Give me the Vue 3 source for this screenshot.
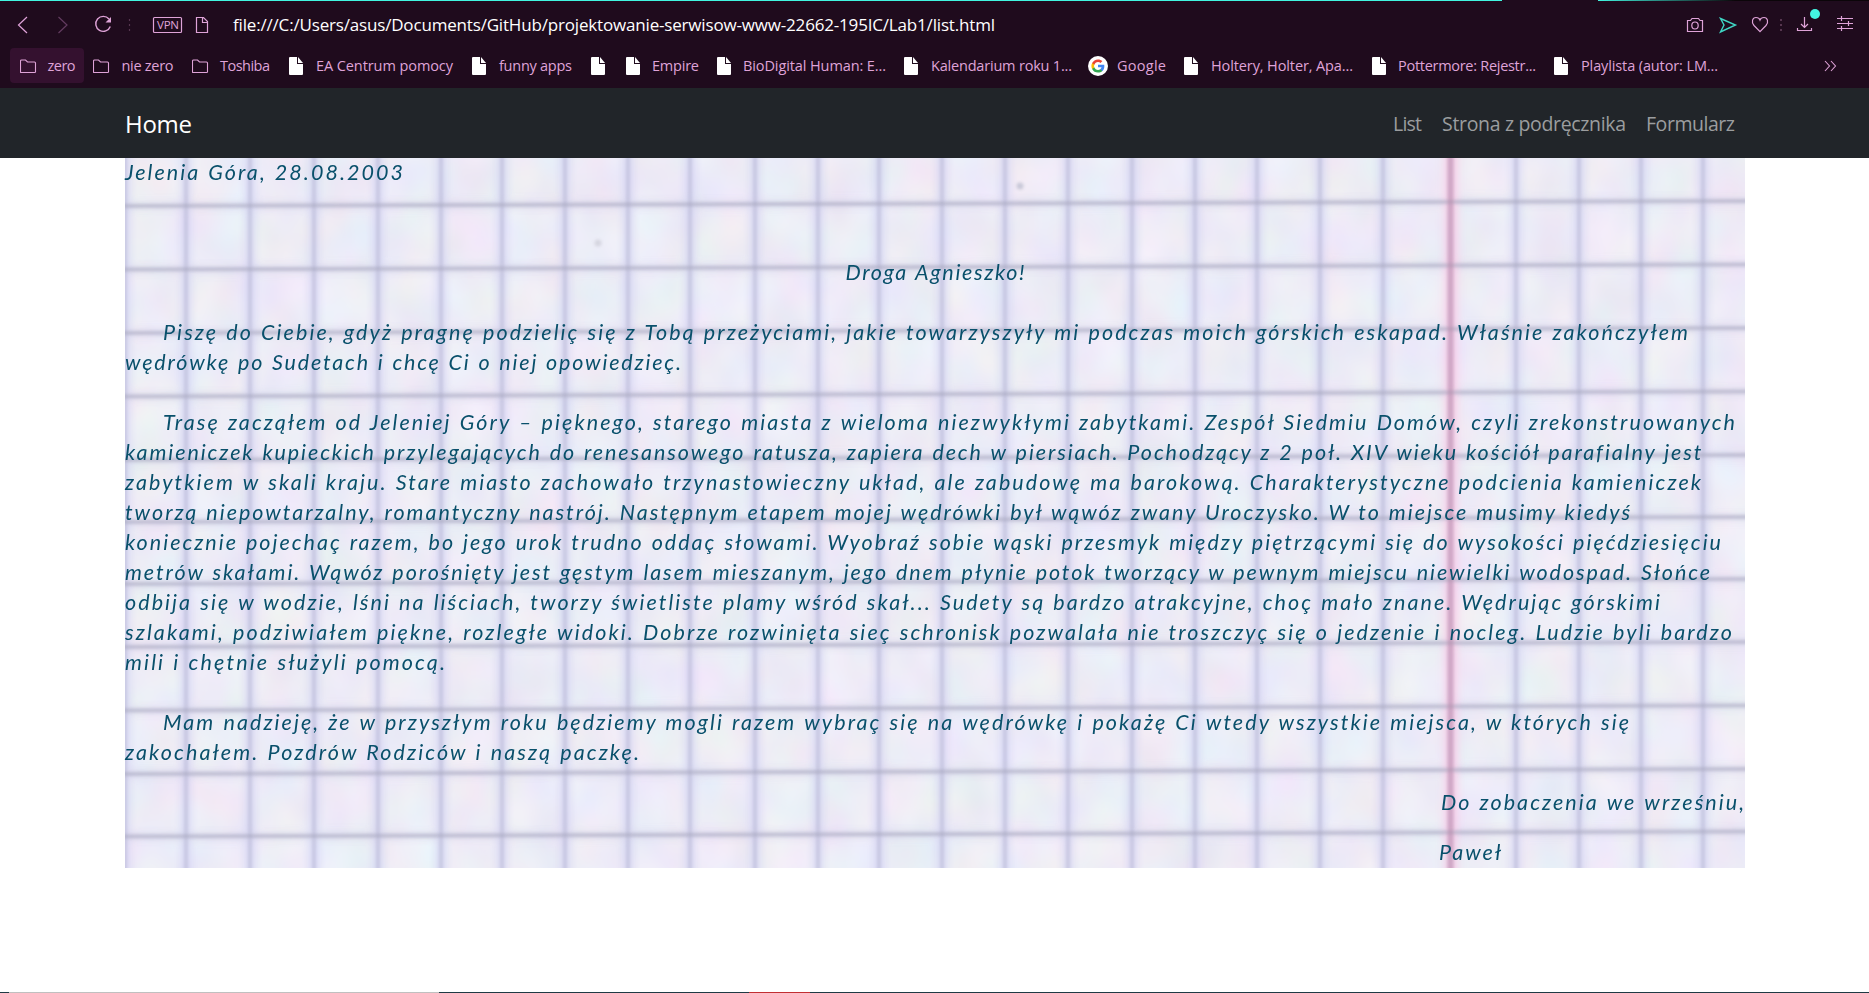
<script setup>
// Stretches or tightens a single line of text to a given width in pixels.
const vFit = {
  mounted(el, { value }) {
    const count = [...el.textContent].length
    const natural = el.getBoundingClientRect().width
    if (count > 1) {
      const spacing = (value - natural) / (count - 1)
      el.style.letterSpacing = `${spacing}px`
      el.style.marginRight = `${-spacing}px`
    }
  },
}

const bookmarks = [
  { icon: 'folder', x: 20, tx: 47.5, w: 28, label: 'zero', active: true },
  { icon: 'folder', x: 93, tx: 121.5, w: 52, label: 'nie zero' },
  { icon: 'folder', x: 192, tx: 220, w: 50, label: 'Toshiba' },
  { icon: 'page', x: 289, tx: 316, w: 137, label: 'EA Centrum pomocy' },
  { icon: 'page', x: 472, tx: 499, w: 73, label: 'funny apps' },
  { icon: 'page', x: 591, tx: 605, w: 0, label: '' },
  { icon: 'page', x: 626, tx: 652, w: 47, label: 'Empire' },
  { icon: 'page', x: 717, tx: 743, w: 143, label: 'BioDigital Human: E...' },
  { icon: 'page', x: 904, tx: 931, w: 141, label: 'Kalendarium roku 1...' },
  { icon: 'google', x: 1088, tx: 1117, w: 49, label: 'Google' },
  { icon: 'page', x: 1184, tx: 1211, w: 142, label: 'Holtery, Holter, Apa...' },
  { icon: 'page', x: 1372, tx: 1398, w: 138, label: 'Pottermore: Rejestr...' },
  { icon: 'page', x: 1554, tx: 1581, w: 137, label: 'Playlista (autor: LM...' },
]
const itemWidth = (i) => (i + 1 < bookmarks.length ? bookmarks[i + 1].x : 1824) - bookmarks[i].x

const paragraphs = [
  [
    ['Piszę do Ciebie, gdyż pragnę podzieliç się z Tobą przeżyciami, jakie towarzyszyły mi podczas moich górskich eskapad. Właśnie zakończyłem', 1525],
    ['wędrówkę po Sudetach i chcę Ci o niej opowiedzieç.', 556],
  ],
  [
    ['Trasę zacząłem od Jeleniej Góry – pięknego, starego miasta z wieloma niezwykłymi zabytkami. Zespół Siedmiu Domów, czyli zrekonstruowanych', 1572],
    ['kamieniczek kupieckich przylegających do renesansowego ratusza, zapiera dech w piersiach. Pochodzący z 2 poł. XIV wieku kościół parafialny jest', 1576],
    ['zabytkiem w skali kraju. Stare miasto zachowało trzynastowieczny układ, ale zabudowę ma barokową. Charakterystyczne podcienia kamieniczek', 1576],
    ['tworzą niepowtarzalny, romantyczny nastrój. Następnym etapem mojej wędrówki był wąwóz zwany Uroczysko. W to miejsce musimy kiedyś', 1505],
    ['koniecznie pojechaç razem, bo jego urok trudno oddaç słowami. Wyobraź sobie wąski przesmyk między piętrzącymi się do wysokości pięćdziesięciu', 1596],
    ['metrów skałami. Wąwóz porośnięty jest gęstym lasem mieszanym, jego dnem płynie potok tworzący w pewnym miejscu niewielki wodospad. Słońce', 1585],
    ['odbija się w wodzie, lśni na liściach, tworzy świetliste plamy wśród skał... Sudety są bardzo atrakcyjne, choç mało znane. Wędrując górskimi', 1535],
    ['szlakami, podziwiałem piękne, rozległe widoki. Dobrze rozwinięta sieç schronisk pozwalała nie troszczyç się o jedzenie i nocleg. Ludzie byli bardzo', 1607],
    ['mili i chętnie służyli pomocą.', 320],
  ],
  [
    ['Mam nadzieję, że w przyszłym roku będziemy mogli razem wybraç się na wędrówkę i pokażę Ci wtedy wszystkie miejsca, w których się', 1466],
    ['zakochałem. Pozdrów Rodziców i naszą paczkę.', 514],
  ],
]

const columns = [0, 61, 125, 189, 253, 316, 377, 440, 503, 565, 630, 693, 754, 817, 880, 943, 1007, 1070, 1132, 1195, 1258, 1391, 1454, 1516, 1578]
const rows = [48, 111.5, 175, 238.5, 302, 364, 426, 489, 552.5, 616, 678.5]
</script>

<template>
  <div class="screen">
    <div class="strip"><i class="s1"></i><i class="s2"></i><i class="s3"></i></div>
    <header class="browser">
      <div class="toolbar">
        <svg class="nav-icons" width="233" height="40" viewBox="0 0 233 40" fill="none" stroke="#dfa3d8" stroke-width="1.2">
          <path d="M27 17L18.500 25L27 33" />
          <path d="M58.500 17L67 25L58.500 33" stroke="#633c60" />
          <path d="M109 19A7.500 7.500 0 1 0 110.300 26.500" stroke-width="1.4" />
          <path d="M111 17V22.500H105.500Z" fill="#dfa3d8" stroke="none" />
          <path d="M129.500 19V32" stroke="#56364f" stroke-dasharray="2 3" />
          <rect x="153.500" y="17.500" width="28" height="15" rx="1" />
          <path d="M196.500 17.500H203.500L207.500 21.500V32.500H196.500ZM202.500 17.500V22.500H207.500" />
        </svg>
        <span class="vpn"><span v-fit="22">VPN</span></span>
        <div class="url"><span v-fit="762">file:///C:/Users/asus/Documents/GitHub/projektowanie-serwisow-www-22662-195IC/Lab1/list.html</span></div>
        <svg class="tools" width="189" height="40" viewBox="1680 0 189 40" fill="none" stroke="#dfa3d8" stroke-width="1.2">
          <path d="M1687.500 20.500H1690.500L1692 18.500H1698.500L1700 20.500H1702.500V31.500H1687.500Z" />
          <ellipse cx="1695" cy="25.500" rx="3.200" ry="3.500" />
          <path d="M1720.500 18.500L1735.500 25L1720.500 32L1724 25Z" stroke="#3fd6c4" stroke-width="1.4" />
          <path d="M1760 31.700L1754 25.500C1751 22 1752.500 17.500 1756 17.500C1758 17.500 1759.500 18.700 1760 20C1760.500 18.700 1762 17.500 1764 17.500C1767.500 17.500 1769 22 1766 25.500Z" />
          <path d="M1781 19V32" stroke="#56364f" stroke-width="2" stroke-dasharray="2 3" />
          <path d="M1804.500 17V27.500M1801 24L1804.500 27.500L1808 24M1797.500 28V30.500H1811.500V28" />
          <circle cx="1815" cy="14" r="5" fill="#43f5e1" stroke="none" />
          <path d="M1837 18.500H1853M1837 23.500H1853M1837 28.500H1853M1841.500 16V21M1848.500 21V26M1841.500 26V31" />
        </svg>
      </div>
      <nav class="bookmarks">
        <div
          v-for="(b, i) in bookmarks"
          :key="i"
          class="bookmark"
          :class="{ active: b.active }"
          :style="{ width: itemWidth(i) + 'px' }"
        >
          <span class="slot" :style="{ width: b.tx - b.x + 'px' }">
            <svg v-if="b.icon === 'folder'" width="17" height="15" viewBox="0 0 17 15" fill="none" stroke="#dfa3d8" stroke-width="1.1">
              <path d="M.500 13V2Q.500 1 1.500 1H5.500L7.500 3H14.500Q15.500 3 15.500 4V13Q15.500 13.500 14.500 13.500H1Q.500 13.500 .500 13Z" />
            </svg>
            <svg v-else-if="b.icon === 'page'" width="14" height="18" viewBox="0 0 14 18" fill="#fff">
              <path d="M1 0H8V7H14V17Q14 18 13 18H1Q0 18 0 17V1Q0 0 1 0Z" />
              <path d="M9 0L14 6H9Z" />
            </svg>
            <svg v-else width="20" height="20" viewBox="0 0 20 20">
              <circle cx="10" cy="10" r="10" fill="#fff" />
              <g transform="translate(2.800 2.800) scale(.6)">
                <path fill="#4285F4" d="M22.560 12.250c0-.780-.070-1.530-.200-2.250H12v4.260h5.920c-.260 1.370-1.040 2.530-2.210 3.310v2.770h3.570c2.080-1.920 3.280-4.740 3.280-8.090z" />
                <path fill="#34A853" d="M12 23c2.970 0 5.460-.980 7.280-2.660l-3.570-2.770c-.980.660-2.230 1.060-3.710 1.060-2.860 0-5.290-1.930-6.160-4.530H2.180v2.840C3.990 20.530 7.700 23 12 23z" />
                <path fill="#FBBC05" d="M5.840 14.090c-.220-.660-.350-1.360-.350-2.090s.130-1.430.350-2.090V7.070H2.180C1.430 8.550 1 10.220 1 12s.430 3.450 1.180 4.930l3.660-2.840z" />
                <path fill="#EA4335" d="M12 5.380c1.620 0 3.060.560 4.210 1.640l3.150-3.150C17.450 2.090 14.970 1 12 1 7.700 1 3.990 3.470 2.180 7.070l3.660 2.840c.870-2.600 3.300-4.530 6.160-4.530z" />
              </g>
            </svg>
          </span>
          <span v-if="b.label" v-fit="b.w" class="label">{{ b.label }}</span>
        </div>
        <svg class="more" width="13" height="12" viewBox="0 0 13 12" fill="none" stroke="#dfa3d8" stroke-width="1.1">
          <path d="M1 1L5.500 6L1 11M7 1L11.500 6L7 11" />
        </svg>
      </nav>
    </header>

    <nav class="navbar">
      <a class="brand"><span v-fit="67">Home</span></a>
      <div class="links">
        <a><span v-fit="29">List</span></a>
        <a><span v-fit="184">Strona z podręcznika</span></a>
        <a><span v-fit="89">Formularz</span></a>
      </div>
    </nav>

    <main class="letter">
      <svg class="paper" width="1620" height="710" viewBox="0 0 1620 710">
        <defs>
          <filter id="tint" x="0" y="0" width="100%" height="100%" color-interpolation-filters="sRGB">
            <feTurbulence type="fractalNoise" baseFrequency="0.022 0.018" numOctaves="2" seed="8" />
            <feColorMatrix values=".08 0 0 0 .890  0 .08 0 0 .887  0 0 .06 0 .936  0 0 0 0 1" />
          </filter>
          <filter id="soft" filterUnits="userSpaceOnUse" x="-20" y="-20" width="1660" height="750"><feGaussianBlur stdDeviation="3.8" /></filter>
          <filter id="fine" filterUnits="userSpaceOnUse" x="-20" y="-20" width="1660" height="750"><feGaussianBlur stdDeviation="1.500" /></filter>
        </defs>
        <rect width="1620" height="710" filter="url(#tint)" />
        <g filter="url(#soft)">
          <path v-for="x in columns" :key="x" :d="`M${x} -10V720`" stroke="#d2d2f3" stroke-width="11" opacity=".65" />
          <path v-for="y in rows" :key="y" :d="`M-10 ${y}L1630 ${y - 5}`" stroke="#d3d2ea" stroke-width="8" opacity=".5" />
          <path d="M1326 -10V720" stroke="#fac8e6" stroke-width="14" opacity=".75" />
        </g>
        <g filter="url(#fine)">
          <path v-for="x in columns" :key="x" :d="`M${x} -10V720`" stroke="#aeaecb" stroke-width="4" opacity=".42" />
          <path v-for="y in rows" :key="y" :d="`M-10 ${y}L1630 ${y - 5}`" stroke="#a6a6bd" stroke-width="4" opacity=".56" />
          <path d="M1325.500 -10V720" stroke="#b58bac" stroke-width="6" opacity=".6" />
          <circle cx="895" cy="28" r="3.500" fill="#c9c9d8" />
          <circle cx="473" cy="85" r="3.500" fill="#d6d6e0" />
        </g>
      </svg>
      <p class="date"><span v-fit="278">Jelenia Góra, 28.08.2003</span></p>
      <p class="greeting"><span v-fit="179">Droga Agnieszko!</span></p>
      <p v-for="(p, i) in paragraphs" :key="i" class="body">
        <span v-for="(line, j) in p" :key="j" class="line"><span v-fit="line[1]">{{ line[0] }}</span></span>
      </p>
      <div class="closing">
        <p class="farewell"><span v-fit="303">Do zobaczenia we wrześniu,</span></p>
        <p><span v-fit="62">Paweł</span></p>
      </div>
    </main>

    <div class="bottom"><i class="b1"></i><i class="b2"></i><i class="b3"></i><i class="b4"></i></div>
  </div>
</template>

<style>
body { background: #fff; overflow: hidden; }
</style>

<style scoped>
.screen { width: 1869px; height: 993px; display: flex; flex-direction: column; background: #fff; font-family: "Open Sans", "Noto Sans", sans-serif; overflow: hidden; }
.screen span { white-space: nowrap; }
.strip { display: flex; height: 1px; flex: none; background: #1f0b1d; }
.s1 { width: 1502px; background: #41f5e0; }
.s2 { width: 96px; }
.s3 { flex: 1; background: linear-gradient(90deg, #41f5e0 0, #0b0509 137px); }
.browser { height: 87px; flex: none; background: #1f0b1d; }
.toolbar { position: relative; display: flex; height: 40px; margin-top: -1px; }
.nav-icons, .tools { display: block; flex: none; }
.vpn { position: absolute; left: 157px; top: 17px; font-size: 11.5px; line-height: 16px; color: #dfa3d8; }
.url { flex: 1; color: #fff; font-size: 17px; line-height: 50px; }
.bookmarks { display: flex; height: 35px; margin-top: 8px; padding-left: 20px; align-items: center; }
.bookmark { position: relative; display: flex; height: 35px; align-items: center; flex: none; color: #dfa3d8; font-size: 14.5px; line-height: 35px; }
.bookmark.active::before { content: ""; position: absolute; left: -10px; top: 0; width: 74px; height: 35px; border-radius: 4px; background: #34112f; }
.slot { position: relative; display: flex; flex: none; padding-top: 1px; }
.label { position: relative; }
.more { flex: none; }
.navbar { display: flex; justify-content: space-between; align-items: center; height: 70px; flex: none; padding: 2px 134px 0 125px; box-sizing: border-box; background: #212529; line-height: 68px; }
.brand { color: #fff; font-size: 24px; }
.brand span, .links span { display: inline-block; }
.links { display: flex; gap: 20px; color: #9b9d9f; font-size: 19.5px; }
.letter { position: relative; width: 1620px; height: 710px; margin-left: 125px; flex: none; color: #09506b; font: italic 400 21.5px/30px Lato, "Open Sans", sans-serif; word-spacing: 1px; }
.paper { position: absolute; left: 0; top: 0; }
.letter p { position: relative; top: -1px; margin: 0; }
.letter .greeting { margin-top: 70px; text-align: center; }
.letter .body { margin-top: 30px; text-indent: 38px; }
.line { display: block; height: 30px; }
.line + .line { text-indent: 0; }
.closing { width: 304px; margin: 20px 0 0 auto; }
.letter .closing p + p { margin: 20px 0 0 -2px; }
.bottom { display: flex; height: 1px; margin-top: auto; background: #1f3a44; }
.b1 { width: 9px; }
.b2 { width: 430px; background: #c0c0c0; }
.b3 { width: 310px; }
.b4 { width: 61px; background: #c22f33; }
</style>
